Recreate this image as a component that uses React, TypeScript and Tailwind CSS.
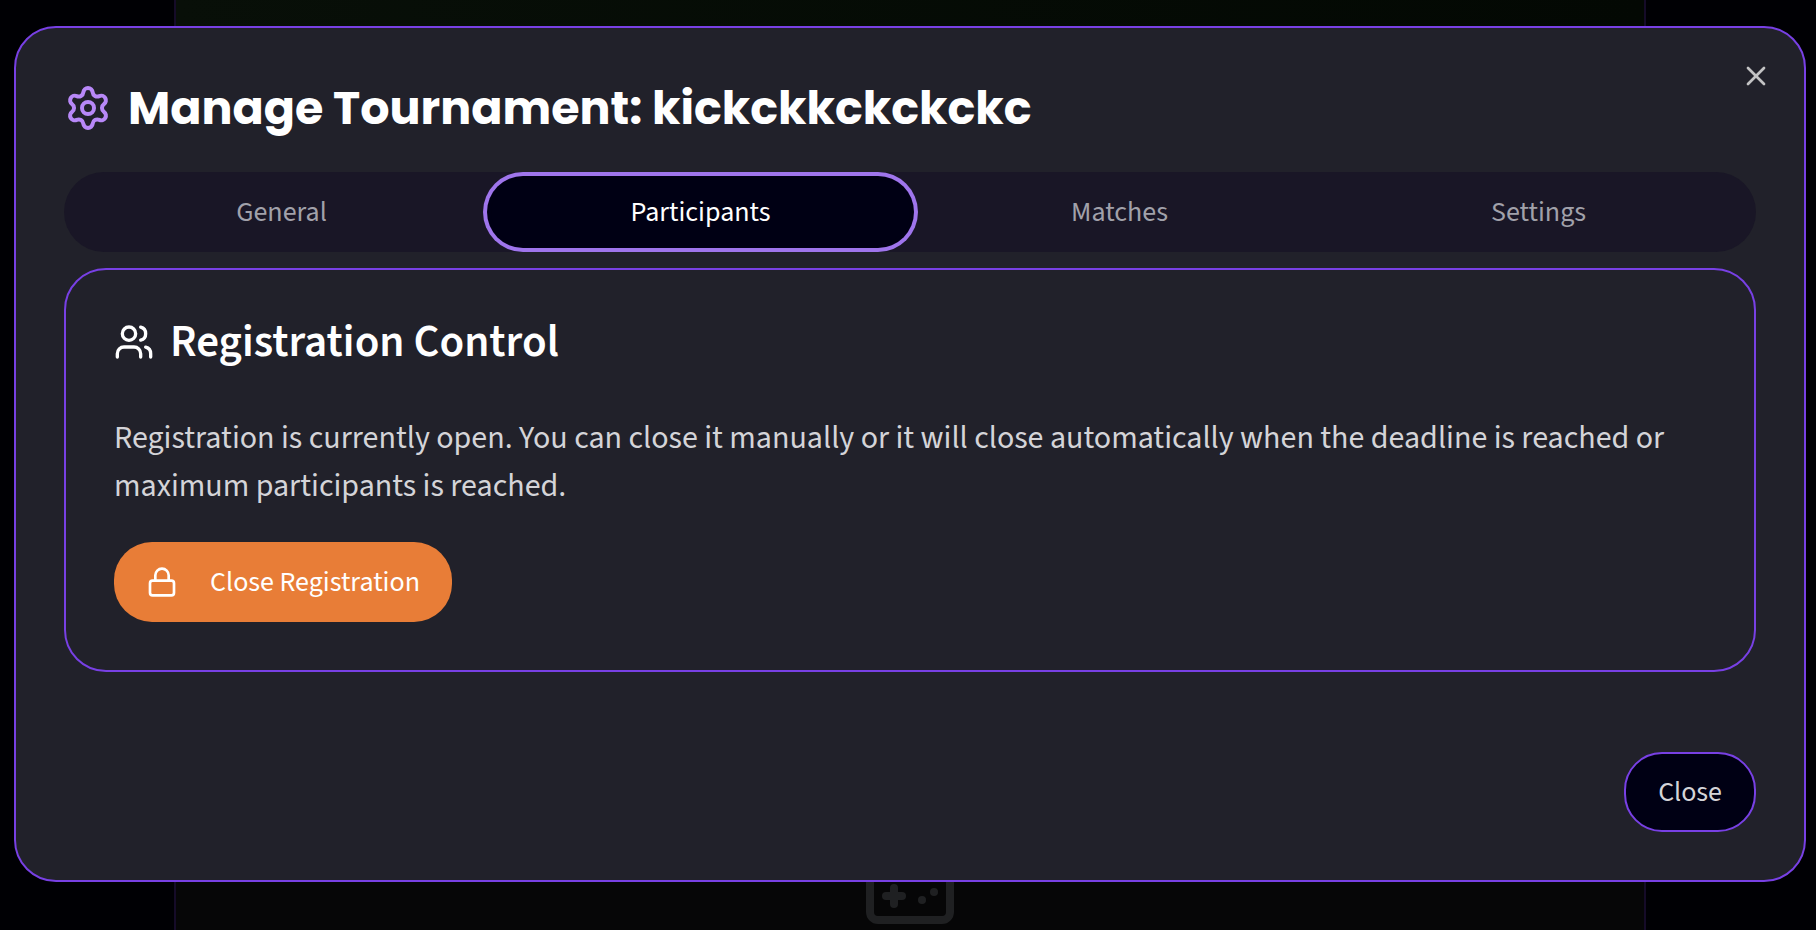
import { useState } from "react";
import { Gamepad, Lock, Settings, Users, X } from "lucide-react";
import { clsx } from "clsx";

const TABS = ["General", "Participants", "Matches", "Settings"];

function Backdrop() {
  return (
    <div className="fixed inset-0 overflow-hidden bg-[#000004] pr-[170px] pl-[174px]" aria-hidden="true">
      <div className="flex h-full flex-col border-x-2 border-[#150b28] bg-[#060607]">
        <div className="h-64 shrink-0 bg-linear-to-r from-[#080f08] to-[#030803]" />
        <div className="flex shrink-0 justify-center pt-[592px]">
          <Gamepad className="size-24 text-[#1f2022]" />
        </div>
      </div>
    </div>
  );
}

function TabBar({ active, onChange }: { active: string; onChange: (tab: string) => void }) {
  return (
    <div role="tablist" className="mt-8 grid grid-cols-4 rounded-full bg-[#191626] p-2">
      {TABS.map((tab) => (
        <button
          key={tab}
          type="button"
          role="tab"
          aria-selected={tab === active}
          onClick={() => onChange(tab)}
          className={clsx(
            "h-16 rounded-full text-[28px] leading-10",
            tab === active
              ? "bg-[#000014] text-white ring-4 ring-[#9f75ec] ring-offset-4 ring-offset-[#000014]"
              : "text-[#a1a1aa]",
          )}
        >
          {tab}
        </button>
      ))}
    </div>
  );
}

function RegistrationControl() {
  return (
    <section className="mt-4 rounded-[42px] border-2 border-[#7840e4] p-12">
      <h3 className="flex items-center gap-4 text-[45px] leading-[48px] font-semibold text-white">
        <Users className="size-10" />
        Registration Control
      </h3>
      <p className="mt-12 text-[32px] leading-[48px] text-[#d4d4d8]">
        Registration is currently open. You can close it manually or it will close automatically
        when the deadline is reached or maximum participants is reached.
      </p>
      <button
        type="button"
        className="mt-8 flex h-20 items-center gap-8 rounded-[38px] bg-[#e87d37] px-8 text-[28px] leading-10 text-white"
      >
        <Lock className="size-8" />
        Close Registration
      </button>
    </section>
  );
}

export default function App() {
  const [tab, setTab] = useState("Participants");

  return (
    <div className="min-h-screen pt-[26px] pr-[10px] pl-[14px] font-['Source_Sans_3','Source_Sans_Pro','Noto_Sans_CJK_SC',sans-serif]">
      <Backdrop />
      <div
        role="dialog"
        aria-labelledby="dialog-title"
        className="relative rounded-[42px] border-2 border-[#7840e4] bg-[#21212a] p-12"
      >
        <h2
          id="dialog-title"
          className="flex items-center gap-4 font-[Poppins,Inter,sans-serif] text-[46px] leading-[64px] font-bold text-white"
        >
          <Settings className="size-12 text-[#b888f8]" />
          Manage Tournament: kickckkckckckc
        </h2>

        <TabBar active={tab} onChange={setTab} />
        <RegistrationControl />

        <div className="mt-20 flex justify-end">
          <button
            type="button"
            className="h-20 rounded-[38px] border-2 border-[#7840e4] bg-[#000014] px-8 text-[28px] leading-10 text-[#d4d4d8]"
          >
            Close
          </button>
        </div>

        <button type="button" aria-label="Close dialog" className="absolute top-8 right-8 text-[#c3c3c4]">
          <X className="size-8" />
        </button>
      </div>
    </div>
  );
}
